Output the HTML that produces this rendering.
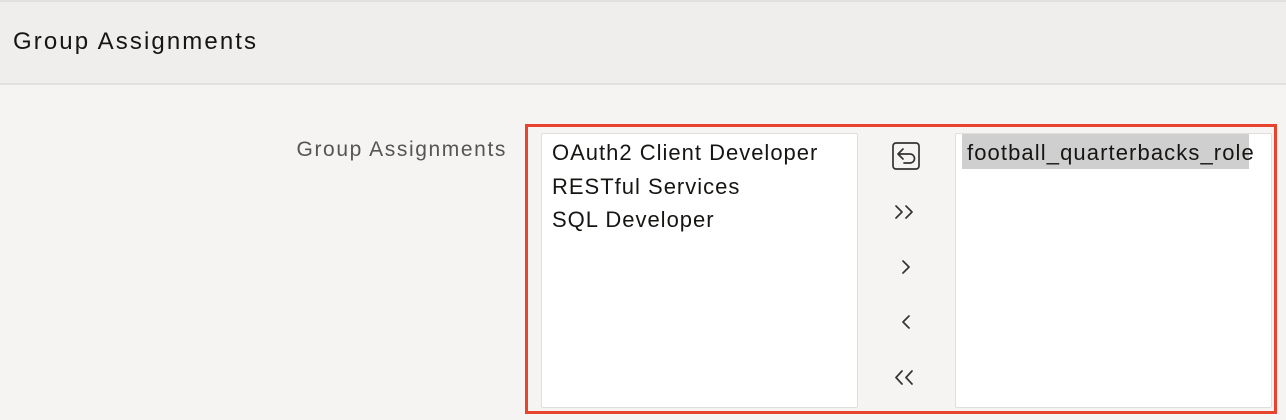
<!DOCTYPE html>
<html><head><style>
body{margin:0;width:1286px;height:420px;background:#f5f4f2;font-family:"Liberation Sans",sans-serif;position:relative;overflow:hidden}
.hdr{position:absolute;left:0;top:0;width:1286px;height:81px;background:#efeeed;border-top:2px solid #e2e1df;border-bottom:2px solid #e2e1df}
.hdr span{position:absolute;left:13px;top:26px;font-size:24px;letter-spacing:2.1px;color:#161513}
.lbl{position:absolute;right:779px;top:138px;font-size:21px;letter-spacing:1.6px;color:#555}
.red{position:absolute;left:525px;top:124px;width:746px;height:284px;border:3px solid #e8432d}
.box{position:absolute;top:133px;height:275px;background:#fff;border:1px solid #e0dfdd;border-radius:2px;box-sizing:border-box}
.it{position:absolute;left:10px;font-size:22px;letter-spacing:1px;color:#161513;white-space:nowrap}
svg{position:absolute}
</style></head><body>
<div class="hdr"><span>Group Assignments</span></div>
<div class="lbl">Group Assignments</div>
<div class="red"></div>
<div class="box" style="left:541px;width:317px">
<div class="it" style="top:6px">OAuth2 Client Developer</div>
<div class="it" style="top:40px">RESTful Services</div>
<div class="it" style="top:73px">SQL Developer</div>
</div>
<div class="box" style="left:955px;width:317px;overflow:hidden">
<div style="position:absolute;left:6px;top:0;width:287px;height:35px;background:#cfcfcf"></div>
<div class="it" style="left:11px;top:6px;letter-spacing:1.1px">football_quarterbacks_role</div>
</div>
<svg width="34" height="260" style="left:889px;top:140px" fill="none" stroke="#333" stroke-width="1.7" stroke-linecap="round" stroke-linejoin="round">
<rect x="4" y="3" width="26" height="26" rx="3"/>
<path d="M14 9 L9 14 L14 19 M9 14 H21 a4.5 4.5 0 0 1 0 9 H15"/>
<path d="M7 66 L13 72 L7 78 M17 66 L23 72 L17 78"/>
<path d="M14 121 L20 127 L14 133"/>
<path d="M20 176 L14 182 L20 188"/>
<path d="M13 231 L7 237.5 L13 244 M23 231 L17 237.5 L23 244"/>
</svg>
</body></html>
